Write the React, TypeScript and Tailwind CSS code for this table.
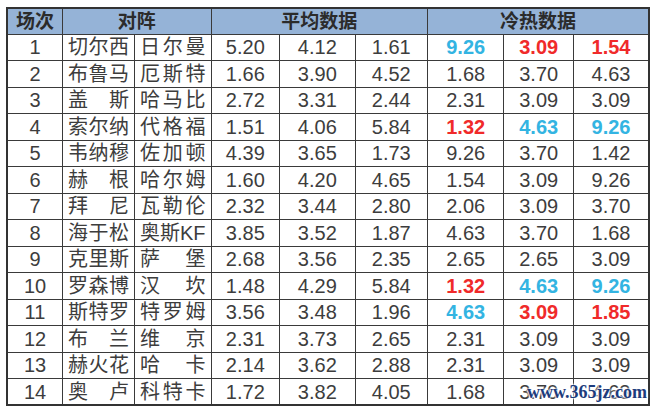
import React from 'react'

type Tone = 'n' | 'r' | 'b'
type Row = { no: number; home: string; away: string; avg: string[]; hot: [string, Tone][] }

const rows: Row[] = [
  { no: 1, home: '切尔西', away: '日尔曼', avg: ['5.20', '4.12', '1.61'], hot: [['9.26', 'b'], ['3.09', 'r'], ['1.54', 'r']] },
  { no: 2, home: '布鲁马', away: '厄斯特', avg: ['1.66', '3.90', '4.52'], hot: [['1.68', 'n'], ['3.70', 'n'], ['4.63', 'n']] },
  { no: 3, home: '盖斯', away: '哈马比', avg: ['2.72', '3.31', '2.44'], hot: [['2.31', 'n'], ['3.09', 'n'], ['3.09', 'n']] },
  { no: 4, home: '索尔纳', away: '代格福', avg: ['1.51', '4.06', '5.84'], hot: [['1.32', 'r'], ['4.63', 'b'], ['9.26', 'b']] },
  { no: 5, home: '韦纳穆', away: '佐加顿', avg: ['4.39', '3.65', '1.73'], hot: [['9.26', 'n'], ['3.70', 'n'], ['1.42', 'n']] },
  { no: 6, home: '赫根', away: '哈尔姆', avg: ['1.60', '4.20', '4.65'], hot: [['1.54', 'n'], ['3.09', 'n'], ['9.26', 'n']] },
  { no: 7, home: '拜尼', away: '瓦勒伦', avg: ['2.32', '3.44', '2.80'], hot: [['2.06', 'n'], ['3.09', 'n'], ['3.70', 'n']] },
  { no: 8, home: '海于松', away: '奥斯KF', avg: ['3.85', '3.52', '1.87'], hot: [['4.63', 'n'], ['3.70', 'n'], ['1.68', 'n']] },
  { no: 9, home: '克里斯', away: '萨堡', avg: ['2.68', '3.56', '2.35'], hot: [['2.65', 'n'], ['2.65', 'n'], ['3.09', 'n']] },
  { no: 10, home: '罗森博', away: '汉坎', avg: ['1.48', '4.29', '5.84'], hot: [['1.32', 'r'], ['4.63', 'b'], ['9.26', 'b']] },
  { no: 11, home: '斯特罗', away: '特罗姆', avg: ['3.56', '3.48', '1.96'], hot: [['4.63', 'b'], ['3.09', 'r'], ['1.85', 'r']] },
  { no: 12, home: '布兰', away: '维京', avg: ['2.31', '3.73', '2.65'], hot: [['2.31', 'n'], ['3.09', 'n'], ['3.09', 'n']] },
  { no: 13, home: '赫火花', away: '哈卡', avg: ['2.14', '3.62', '2.88'], hot: [['2.31', 'n'], ['3.09', 'n'], ['3.09', 'n']] },
  { no: 14, home: '奥卢', away: '科特卡', avg: ['1.72', '3.82', '4.05'], hot: [['1.68', 'n'], ['3.70', 'n'], ['4.63', 'n']] },
]

const tone: Record<Tone, string> = {
  n: 'text-[#3d3d3d]',
  r: 'text-[#f02a2a] font-bold',
  b: 'text-[#33b4e2] font-bold',
}

// two-character names are spread across the cell, like Excel's distributed alignment
function Name({ text }: { text: string }) {
  const chars = text.match(/KF|./g) ?? []
  return (
    <td className="border border-[#3a3a3a] px-[5px]">
      <div className="flex justify-between">
        {chars.map((c, i) => <span key={i}>{c}</span>)}
      </div>
    </td>
  )
}

export default function App() {
  const cell = 'border border-[#3a3a3a] text-center'
  return (
    <div className="relative w-[650px] h-[408px] bg-white pt-[7px] pl-[6px] text-[#3d3d3d]"
      style={{ fontFamily: '"Liberation Sans", "Noto Sans CJK SC", sans-serif' }}>
      <table className="table-fixed border-collapse border-2 border-[#333] text-[19px] leading-none">
        <colgroup>
          <col className="w-[56px]" /><col className="w-[72px]" /><col className="w-[71px]" />
          <col className="w-[69px]" /><col className="w-[76px]" /><col className="w-[73px]" />
          <col className="w-[77px]" /><col className="w-[70px]" /><col className="w-[76px]" />
        </colgroup>
        <thead>
          <tr className="h-[26px] bg-[#95b3d7] font-bold text-[#2b2b2b]">
            <th className={cell}>场次</th>
            <th className={cell} colSpan={2}>对阵</th>
            <th className={cell} colSpan={3}>平均数据</th>
            <th className={cell} colSpan={3}>冷热数据</th>
          </tr>
        </thead>
        <tbody>
          {rows.map(r => (
            <tr key={r.no} className="h-[26.5px] text-[20px]">
              <td className={cell}>{r.no}</td>
              <Name text={r.home} />
              <Name text={r.away} />
              {r.avg.map((v, i) => <td key={i} className={cell}>{v}</td>)}
              {r.hot.map(([v, t], i) => <td key={i} className={`${cell} ${tone[t]}`}>{v}</td>)}
            </tr>
          ))}
        </tbody>
      </table>
      <div className="absolute left-[527px] top-[383px] text-[18px] leading-none font-bold text-[#1d3c7c] [text-shadow:0_0_2px_#fff,0_0_3px_#fff,0_0_3px_#fff,0_0_1px_#fff]"
        style={{ fontFamily: '"Liberation Serif", serif' }}>
        www.365jz.com
      </div>
    </div>
  )
}
